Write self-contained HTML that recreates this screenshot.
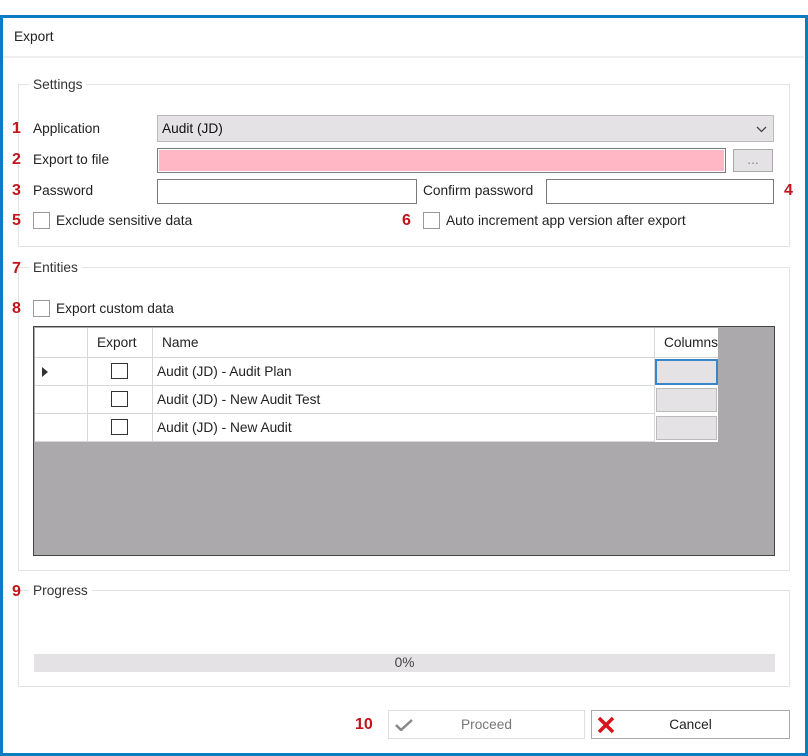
<!DOCTYPE html>
<html><head><style>
*{box-sizing:border-box;margin:0;padding:0}
body{width:808px;height:756px;background:#fff;font-family:"Liberation Sans",sans-serif;font-size:13.7px;color:#222;position:relative;overflow:hidden}
.a{position:absolute}
.num{position:absolute;color:#c0151b;font-weight:bold;font-size:16px}
.grp{position:absolute;border:1px solid #e3e3e3}
.lg{position:absolute;background:#fff;padding:0 4px;color:#333}
.cb{position:absolute;width:17px;height:17px;border:1px solid #999;background:#fff}
.tb{position:absolute;border:1px solid #7a7a7a;background:#fff}
.cell{position:absolute;background:#fff;border-right:1px solid #d8d8d8;border-bottom:1px solid #d8d8d8;line-height:27px;padding-left:4px}
.sq{position:absolute;width:17px;height:16px;border:1px solid #333;background:#fff}
</style></head><body>
<div class="a" style="left:0;top:15px;width:808px;height:741px;border:3px solid #0a7cc1;border-top-width:3px"></div>
<div class="a" style="left:14px;top:29px">Export</div>
<div class="a" style="left:3px;top:56px;width:801px;height:2px;background:#eee"></div>

<div class="grp" style="left:18px;top:84px;width:772px;height:163px"></div>
<div class="lg" style="left:29px;top:77px">Settings</div>
<span class="num" style="left:12px;top:120px">1</span>
<div class="a" style="left:33px;top:121px">Application</div>
<div class="a" style="left:157px;top:115px;width:617px;height:27px;background:#e4e2e5;border:1px solid #bbb;padding:5px 4px;color:#111">Audit (JD)
<svg class="a" style="right:6px;top:10px" width="11" height="7" viewBox="0 0 11 7"><path d="M1 1l4.5 4.5L10 1" stroke="#444" stroke-width="1.3" fill="none"/></svg></div>
<span class="num" style="left:12px;top:151px">2</span>
<div class="a" style="left:33px;top:152px">Export to file</div>
<div class="a" style="left:157px;top:148px;width:569px;height:25px;background:#ffb6c5;border:1px solid #7a7a7a;box-shadow:inset 0 0 0 1px #fff"></div>
<div class="a" style="left:733px;top:149px;width:40px;height:23px;background:#e4e2e5;border:1px solid #aaa;text-align:center;color:#888;line-height:20px">...</div>
<span class="num" style="left:12px;top:182px">3</span>
<div class="a" style="left:33px;top:183px">Password</div>
<div class="tb" style="left:157px;top:179px;width:260px;height:25px"></div>
<div class="a" style="left:423px;top:183px">Confirm password</div>
<div class="tb" style="left:546px;top:179px;width:228px;height:25px"></div>
<span class="num" style="left:784px;top:182px">4</span>
<span class="num" style="left:12px;top:212px">5</span>
<div class="cb" style="left:33px;top:212px"></div>
<div class="a" style="left:56px;top:213px">Exclude sensitive data</div>
<span class="num" style="left:402px;top:212px">6</span>
<div class="cb" style="left:423px;top:212px"></div>
<div class="a" style="left:446px;top:213px">Auto increment app version after export</div>

<div class="grp" style="left:18px;top:267px;width:772px;height:304px"></div>
<div class="lg" style="left:29px;top:260px">Entities</div>
<span class="num" style="left:12px;top:260px">7</span>
<span class="num" style="left:12px;top:300px">8</span>
<div class="cb" style="left:33px;top:300px"></div>
<div class="a" style="left:56px;top:301px">Export custom data</div>

<div class="a" style="left:33px;top:326px;width:742px;height:230px;background:#aba9ac;border:1px solid #444"></div>
<div class="cell" style="left:35px;top:328px;width:53px;height:30px"></div>
<div class="cell" style="left:88px;top:328px;width:65px;height:30px;padding-left:9px;line-height:30px">Export</div>
<div class="cell" style="left:153px;top:328px;width:502px;height:30px;padding-left:9px;line-height:30px">Name</div>
<div class="cell" style="left:655px;top:328px;width:63px;height:30px;padding-left:9px;line-height:30px;border-right:none">Columns</div>

<div class="cell" style="left:35px;top:358px;width:53px;height:28px"><svg class="a" style="left:7px;top:9px" width="6" height="10"><path d="M0 0L6 5L0 10Z" fill="#333"/></svg></div>
<div class="cell" style="left:88px;top:358px;width:65px;height:28px"><div class="sq" style="left:23px;top:5px"></div></div>
<div class="cell" style="left:153px;top:358px;width:502px;height:28px">Audit (JD) - Audit Plan</div>
<div class="a" style="left:655px;top:358px;width:63px;height:28px;background:#fff"><div class="a" style="left:0;top:1px;width:63px;height:26px;background:#e4e2e5;border:2px solid #3a86c8"></div></div>

<div class="cell" style="left:35px;top:386px;width:53px;height:28px"></div>
<div class="cell" style="left:88px;top:386px;width:65px;height:28px"><div class="sq" style="left:23px;top:5px"></div></div>
<div class="cell" style="left:153px;top:386px;width:502px;height:28px">Audit (JD) - New Audit Test</div>
<div class="a" style="left:655px;top:386px;width:63px;height:28px;background:#fff"><div class="a" style="left:1px;top:2px;width:61px;height:24px;background:#e4e2e5;border:1px solid #bbb"></div></div>

<div class="cell" style="left:35px;top:414px;width:53px;height:28px"></div>
<div class="cell" style="left:88px;top:414px;width:65px;height:28px"><div class="sq" style="left:23px;top:5px"></div></div>
<div class="cell" style="left:153px;top:414px;width:502px;height:28px">Audit (JD) - New Audit</div>
<div class="a" style="left:655px;top:414px;width:63px;height:28px;background:#fff"><div class="a" style="left:1px;top:2px;width:61px;height:24px;background:#e4e2e5;border:1px solid #bbb"></div></div>

<div class="grp" style="left:18px;top:590px;width:772px;height:97px"></div>
<div class="lg" style="left:29px;top:583px">Progress</div>
<span class="num" style="left:12px;top:583px">9</span>
<div class="a" style="left:34px;top:654px;width:741px;height:18px;background:#e4e2e5;text-align:center;line-height:18px;color:#444">0%</div>

<span class="num" style="left:355px;top:716px">10</span>
<div class="a" style="left:388px;top:710px;width:197px;height:29px;border:1px solid #ddd;text-align:center;line-height:27px;color:#777">Proceed
<svg class="a" style="left:6px;top:8px" width="18" height="12"><path d="M1 6l5 5L17 1" stroke="#888" stroke-width="2.5" fill="none"/></svg></div>
<div class="a" style="left:591px;top:710px;width:199px;height:29px;border:1px solid #aaa;text-align:center;line-height:27px;color:#222">Cancel
<svg class="a" style="left:5px;top:5px" width="18" height="18"><path d="M2 2L16 16M16 2L2 16" stroke="#d8141b" stroke-width="3.5"/></svg></div>
</body></html>
